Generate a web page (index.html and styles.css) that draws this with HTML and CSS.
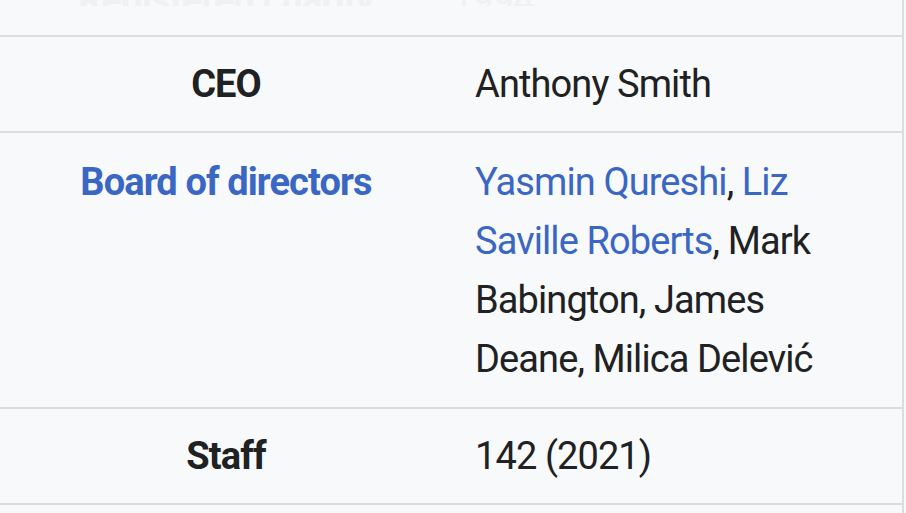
FILE: index.html
```html
<!DOCTYPE html>
<html lang="en">
<head>
<meta charset="utf-8">
<title>Infobox</title>
<link rel="stylesheet" href="styles.css">
</head>
<body>
<table class="infobox">
  <tbody>
    <tr class="row row-clipped">
      <th class="label"><span class="ghost">Registered charity</span></th>
      <td class="value"><span class="ghost">1994</span></td>
    </tr>
    <tr class="row">
      <th class="label">CEO</th>
      <td class="value">Anthony Smith</td>
    </tr>
    <tr class="row row-multi">
      <th class="label"><a href="#">Board of directors</a></th>
      <td class="value"><a href="#">Yasmin Qureshi</a>, <a href="#">Liz Saville Roberts</a>, Mark Babington, James Deane, Milica Delević</td>
    </tr>
    <tr class="row">
      <th class="label">Staff</th>
      <td class="value">142 (2021)</td>
    </tr>
    <tr class="row row-tail">
      <th class="label"></th>
      <td class="value"></td>
    </tr>
  </tbody>
</table>
</body>
</html>
```
FILE: styles.css
```css
html, body {
  margin: 0;
  padding: 0;
  background: #f8f9fa;
  overflow: hidden;
}

body {
  width: 906px;
  height: 513px;
  font-family: Roboto, "Noto Sans", "Liberation Sans", sans-serif;
  color: #202122;
}

.infobox {
  width: 904px;
  border-collapse: collapse;
  border-right: 2px solid #dcdddf;
  background: #f8f9fa;
  font-size: 38px;
  line-height: 59px;
  letter-spacing: -0.9px;
}

.row {
  border-bottom: 2px solid #dcdddf;
}

.label {
  width: 452px;
  padding: 18px 0 17px 0;
  font-weight: 700;
  text-align: center;
  vertical-align: top;
}

.value {
  padding: 18px 84px 17px 23px;
  font-weight: 400;
  text-align: left;
  vertical-align: top;
}

.row-multi .label,
.row-multi .value {
  padding-top: 20px;
  padding-bottom: 18px;
}

a {
  color: #3a66c4;
  text-decoration: none;
}

.row-clipped {
  height: 36px;
}

.row-clipped .label,
.row-clipped .value {
  height: 34px;
  padding: 0;
  vertical-align: top;
}

.ghost {
  display: block;
  height: 6px;
  overflow: hidden;
  font-size: 38px;
  line-height: 0;
  color: #f0f1f3;
}

.row-tail .label,
.row-tail .value {
  height: 20px;
  padding: 0;
}
```
